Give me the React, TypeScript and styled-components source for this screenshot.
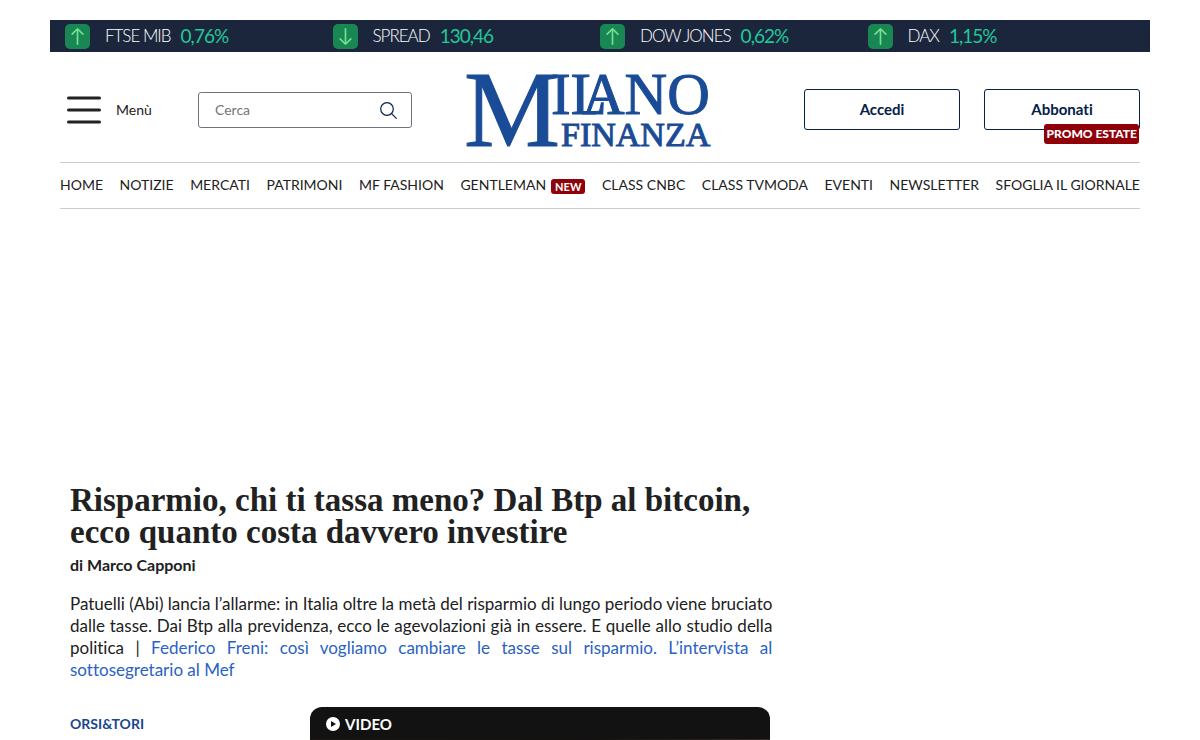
import React from "react";
import styled, { createGlobalStyle } from "styled-components";

const GlobalStyle = createGlobalStyle`
  *, *::before, *::after { box-sizing: border-box; }
  body {
    margin: 0;
    background: #fff;
    color: #212121;
    font-family: Lato, "Liberation Sans", sans-serif;
    font-size: 16px;
    font-variant-ligatures: none;
  }
  a { color: inherit; text-decoration: none; }
`;

const Page = styled.div`
  display: flex;
  flex-direction: column;
  min-height: 100vh;
  max-width: 1100px;
  margin: 0 auto;
  padding-top: 20px;
`;

const Ticker = styled.div`
  display: grid;
  grid-template-columns: repeat(4, 1fr);
  padding: 0 15px;
  background: #1b263d;
`;

const Quote = styled.div`
  display: flex;
  align-items: center;
  height: 32px;
  font-weight: 300;
  letter-spacing: -1px;
`;

const TrendBadge = styled.span`
  display: grid;
  place-items: center;
  width: 25px;
  height: 25px;
  margin-right: 15px;
  border-radius: 5px;
  background: #198754;
`;

const QuoteName = styled.span`
  margin-right: 10px;
  padding-bottom: 2px;
  color: #fff;
  font-size: 17px;
`;

const QuoteValue = styled.span`
  padding-bottom: 2px;
  color: #20c997;
  font-size: 19px;
  font-weight: 400;
`;

const Header = styled.header`
  display: flex;
  align-items: center;
  height: 110px;
  margin: 0 10px;
`;

const MenuButton = styled.button`
  display: flex;
  align-items: center;
  gap: 14px;
  width: 138px;
  padding: 0 0 0 6px;
  border: 0;
  background: none;
  color: #212121;
  font: 400 14px Lato, sans-serif;
  margin-top: 6px;
`;

const MenuLabel = styled.span`
  padding-bottom: 2px;
`;

const SearchForm = styled.form`
  display: flex;
  align-items: center;
  width: 214px;
  height: 36px;
  margin-top: 6px;
  padding: 0 14px 0 16px;
  border: 1px solid #6c757d;
  border-radius: 3px;
`;

const SearchInput = styled.input`
  flex: 1;
  min-width: 0;
  padding: 0 0 2px;
  border: 0;
  outline: 0;
  background: none;
  color: #212121;
  font: 400 14px Lato, sans-serif;
  &::placeholder { color: #757575; opacity: 1; }
`;

const SearchButton = styled.button`
  display: flex;
  padding: 0;
  border: 0;
  background: none;
  color: #05204a;
`;

const LogoLink = styled.a`
  display: block;
  margin: 8px auto 0 53px;
  line-height: 0;
`;

const Actions = styled.div`
  display: flex;
  gap: 24px;
  margin-top: 4px;
`;

const ActionItem = styled.div`
  position: relative;
`;

const ActionButton = styled.button`
  width: 156px;
  height: 41px;
  padding: 0;
  border: 1px solid #05204a;
  border-radius: 3px;
  background: #fff;
  color: #05204a;
  font: 700 15px Lato, sans-serif;
  font-variant-ligatures: none;
`;

const PromoTag = styled.span`
  position: absolute;
  right: 1px;
  bottom: -14px;
  padding: 0 2px;
  border-radius: 3px;
  background: #900009;
  color: #fff;
  font-size: 12px;
  font-weight: 900;
  line-height: 20px;
  white-space: nowrap;
`;

const Nav = styled.nav`
  display: flex;
  justify-content: space-between;
  margin: 0 10px;
  padding: 12px 0 13px;
  border-top: 1px solid #ccc;
  border-bottom: 1px solid #ccc;
  font-size: 14px;
  line-height: 20px;
  white-space: nowrap;
`;

const NavLink = styled.a`
  display: flex;
  align-items: center;
  gap: 5px;
`;

const NewTag = styled.span`
  margin-top: 2px;
  padding: 0 4px;
  border-radius: 3px;
  background: #900009;
  color: #fff;
  font-size: 11px;
  font-weight: 700;
  line-height: 15px;
`;

const BannerSlot = styled.div`
  min-height: 275px;
`;

const Main = styled.main`
  display: flex;
  flex: 1;
  flex-direction: column;
  width: calc(100% * 2 / 3 - 13px);
  margin-left: 10px;
`;

const Lead = styled.article`
  padding: 0 10px;
`;

const Title = styled.h1`
  margin: 0;
  font: 700 33px/32px "Liberation Serif", serif;
`;

const Byline = styled.p`
  margin: 7px 0 18px;
  font-weight: 700;
  line-height: 20px;
`;

const Summary = styled.p`
  margin: 0 -2px 26px 0;
  font-size: 17px;
  line-height: 22px;
  text-align: justify;
`;

const SummaryLink = styled.a`
  color: #2962c4;
`;

const Columns = styled.div`
  display: grid;
  flex: 1;
  grid-template-columns: 1fr 2fr;
`;

const Column = styled.section`
  display: flex;
  flex-direction: column;
  padding: 0 10px;
`;

const Kicker = styled.h2`
  margin: 7px 0 0;
  color: #1a468f;
  font-size: 14px;
  font-weight: 700;
  line-height: 20px;
`;

const VideoCard = styled.div`
  display: flex;
  flex: 1;
  flex-direction: column;
  border-radius: 12px 12px 0 0;
  background: #121212;
  overflow: hidden;
`;

const VideoTitle = styled.h2`
  display: flex;
  align-items: center;
  gap: 5px;
  height: 32px;
  margin: 0;
  padding: 2px 16px 0;
  color: #fff;
  font-size: 15px;
  font-weight: 700;
`;

const VideoFrame = styled.div`
  flex: 1;
  background: linear-gradient(90deg, #1c1613, #15100f 60%, #332c29);
`;

const ArrowIcon = ({ down }: { down?: boolean }) => (
  <svg width="19" height="19" viewBox="0 0 16 16" fill="none" stroke="#75e08c" strokeWidth="1.400" strokeLinecap="round" strokeLinejoin="round" aria-hidden="true">
    {down ? <path d="M8 1.500v13M3.500 10L8 14.500 12.500 10" /> : <path d="M8 14.500v-13M3.500 6L8 1.500 12.500 6" />}
  </svg>
);

const MenuIcon = () => (
  <svg width="36" height="30" viewBox="0 0 36 30" stroke="#212121" strokeWidth="3" strokeLinecap="round" aria-hidden="true">
    <path d="M2.500 3h31M2.500 15h31M2.500 27h31" />
  </svg>
);

const SearchIcon = () => (
  <svg width="17" height="17" viewBox="0 0 17 17" fill="none" stroke="currentColor" strokeWidth="1.200" strokeLinecap="round" aria-hidden="true">
    <circle cx="7" cy="7" r="6.300" />
    <path d="M11.600 11.600l4.700 4.700" />
  </svg>
);

const PlayIcon = () => (
  <svg width="14" height="14" viewBox="0 0 14 14" aria-hidden="true">
    <circle cx="7" cy="7" r="7" fill="#fff" />
    <path d="M5 4v6l5-3z" fill="#121212" />
  </svg>
);

const LogoArt = styled.svg`
  overflow: visible;
`;

const Logo = () => (
  <LogoArt width="244" height="80" viewBox="0 0 244 80" fill="#1a4b96" stroke="#1a4b96" fontFamily="Liberation Serif, serif" role="img" aria-label="Milano Finanza">
    <text x="-1" y="75" fontSize="108" strokeWidth="1">M</text>
    <text x="86" y="43" fontSize="59" strokeWidth="1">IL</text>
    <text x="117" y="43" fontSize="59" strokeWidth="1">ANO</text>
    <text x="96" y="75" fontSize="34" strokeWidth="1">FINANZA</text>
  </LogoArt>
);

const quotes = [
  { name: "FTSE MIB", value: "0,76%" },
  { name: "SPREAD", value: "130,46", down: true },
  { name: "DOW JONES", value: "0,62%" },
  { name: "DAX", value: "1,15%" },
];

const sections = [
  "HOME", "NOTIZIE", "MERCATI", "PATRIMONI", "MF FASHION", "GENTLEMAN",
  "CLASS CNBC", "CLASS TVMODA", "EVENTI", "NEWSLETTER", "SFOGLIA IL GIORNALE",
];

export default function App() {
  return (
    <>
      <GlobalStyle />
      <Page>
        <Ticker>
          {quotes.map((q) => (
            <Quote key={q.name}>
              <TrendBadge><ArrowIcon down={q.down} /></TrendBadge>
              <QuoteName>{q.name}</QuoteName>
              <QuoteValue>{q.value}</QuoteValue>
            </Quote>
          ))}
        </Ticker>
        <Header>
          <MenuButton type="button"><MenuIcon /><MenuLabel>Menù</MenuLabel></MenuButton>
          <SearchForm role="search">
            <SearchInput type="search" placeholder="Cerca" aria-label="Cerca" />
            <SearchButton type="submit" aria-label="Avvia ricerca"><SearchIcon /></SearchButton>
          </SearchForm>
          <LogoLink href="#"><Logo /></LogoLink>
          <Actions>
            <ActionItem><ActionButton type="button">Accedi</ActionButton></ActionItem>
            <ActionItem>
              <ActionButton type="button">Abbonati</ActionButton>
              <PromoTag>PROMO ESTATE</PromoTag>
            </ActionItem>
          </Actions>
        </Header>
        <Nav>
          {sections.map((name) => (
            <NavLink href="#" key={name}>
              {name}
              {name === "GENTLEMAN" && <NewTag>NEW</NewTag>}
            </NavLink>
          ))}
        </Nav>
        <BannerSlot />
        <Main>
          <Lead>
            <Title>Risparmio, chi ti tassa meno? Dal Btp al bitcoin, ecco quanto costa davvero investire</Title>
            <Byline>di Marco Capponi</Byline>
            <Summary>
              Patuelli (Abi) lancia l’allarme: in Italia oltre la metà del risparmio di lungo periodo viene bruciato dalle tasse. Dai Btp alla previdenza, ecco le agevolazioni già in essere. E quelle allo studio della politica |{" "}
              <SummaryLink href="#">Federico Freni: così vogliamo cambiare le tasse sul risparmio. L’intervista al sottosegretario al Mef</SummaryLink>
            </Summary>
          </Lead>
          <Columns>
            <Column><Kicker>ORSI&amp;TORI</Kicker></Column>
            <Column>
              <VideoCard>
                <VideoTitle><PlayIcon />VIDEO</VideoTitle>
                <VideoFrame />
              </VideoCard>
            </Column>
          </Columns>
        </Main>
      </Page>
    </>
  );
}
